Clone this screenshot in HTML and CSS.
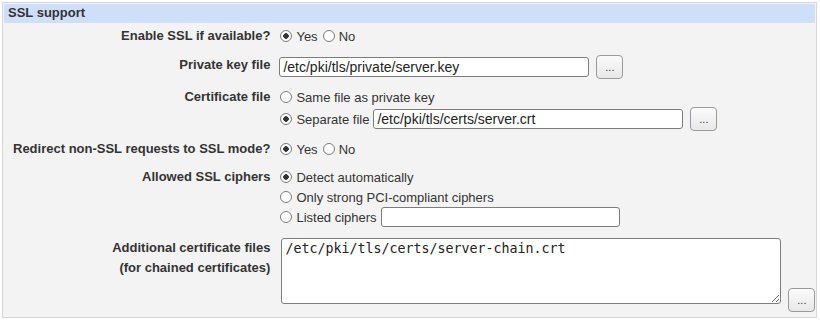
FILE: index.html
```html
<!DOCTYPE html>
<html lang="en">
<head>
    <meta charset="UTF-8">
    <title>SSL support</title>
    <link rel="stylesheet" href="styles.css">
</head>
<body>
<div class="section">
    <div class="section-head">SSL support</div>
    <table class="opts">
        <tr class="first">
            <td class="lbl">Enable SSL if available?</td>
            <td class="val">
                <div class="line">
                    <label><input type="radio" name="ssl" checked> Yes</label>
                    <label><input type="radio" name="ssl"> No</label>
                </div>
            </td>
        </tr>
        <tr>
            <td class="lbl">Private key file</td>
            <td class="val">
                <div class="line">
                    <input type="text" class="file" value="/etc/pki/tls/private/server.key">
                    <button class="pick">...</button>
                </div>
            </td>
        </tr>
        <tr>
            <td class="lbl">Certificate file</td>
            <td class="val">
                <div class="line">
                    <label><input type="radio" name="cert"> Same file as private key</label>
                </div>
                <div class="line">
                    <label><input type="radio" name="cert" checked> Separate file</label>
                    <input type="text" class="file" value="/etc/pki/tls/certs/server.crt">
                    <button class="pick">...</button>
                </div>
            </td>
        </tr>
        <tr>
            <td class="lbl">Redirect non-SSL requests to SSL mode?</td>
            <td class="val">
                <div class="line">
                    <label><input type="radio" name="redir" checked> Yes</label>
                    <label><input type="radio" name="redir"> No</label>
                </div>
            </td>
        </tr>
        <tr>
            <td class="lbl">Allowed SSL ciphers</td>
            <td class="val">
                <div class="line"><label><input type="radio" name="ciph" checked> Detect automatically</label></div>
                <div class="line"><label><input type="radio" name="ciph"> Only strong PCI-compliant ciphers</label></div>
                <div class="line">
                    <label><input type="radio" name="ciph"> Listed ciphers</label>
                    <input type="text" class="ciphers" value="">
                </div>
            </td>
        </tr>
        <tr class="last">
            <td class="lbl">Additional certificate files<br>(for chained certificates)</td>
            <td class="val">
                <div class="line bottom">
                    <textarea class="extra">/etc/pki/tls/certs/server-chain.crt</textarea>
                    <button class="pick">...</button>
                </div>
            </td>
        </tr>
    </table>
</div>
</body>
</html>
```

FILE: styles.css
```css
body {
    margin: 0;
    background: #fff;
    font-family: "Liberation Sans", Arial, sans-serif;
    font-size: 13px;
    color: #333;
}
.section {
    margin: 2px 3px 0 2px;
    border: 1px solid #d6d6d6;
    padding: 1px;
    background: #f3f3f3;
}
.section-head {
    background: #cfdffa;
    font-weight: bold;
    height: 19px;
    line-height: 17px;
    padding-left: 4px;
}
.opts {
    border-collapse: collapse;
    margin: 0;
}
.opts td {
    padding: 4px 0 4px 0;
    vertical-align: top;
}
.opts .first td {
    padding-top: 3px;
    padding-bottom: 5px;
}
.opts .last td {
    padding-top: 7px;
}
.lbl {
    text-align: right;
    font-weight: bold;
    line-height: 20px;
    padding-left: 9px !important;
    padding-right: 5px !important;
    white-space: nowrap;
}
.line {
    display: flex;
    align-items: center;
    min-height: 20px;
}
.line.bottom {
    align-items: flex-end;
}
label {
    display: inline-flex;
    align-items: center;
    white-space: nowrap;
}
input[type="radio"] {
    appearance: none;
    width: 12px;
    height: 12px;
    margin: 0 4px 0 5px;
    border: 1px solid #7a7a7a;
    border-radius: 50%;
    background: #fff;
}
input[type="radio"]:checked {
    background: radial-gradient(circle, #333 0 2.5px, #fff 3px);
}
input[type="text"] {
    height: 20px;
    box-sizing: border-box;
    border: 1px solid #7d7d7d;
    border-radius: 3px;
    padding: 0 3px;
    margin-left: 4px;
    font-family: "Liberation Sans", Arial, sans-serif;
    font-size: 14px;
    color: #222;
    background: #fff;
}
.file {
    width: 310px;
}
.ciphers {
    width: 239px;
}
.pick {
    width: 27px;
    height: 24px;
    margin-left: 7px;
    padding: 0;
    border: 1px solid #9a9a9a;
    border-radius: 4px;
    background: linear-gradient(#fbfbfb, #e8e8e8);
    font-family: "Liberation Sans", Arial, sans-serif;
    font-size: 11px;
    color: #333;
}
.extra {
    width: 500px;
    height: 66px;
    box-sizing: border-box;
    margin: 0 0 8px 6px;
    border: 1px solid #7d7d7d;
    border-radius: 3px;
    padding: 2px 3px;
    font-family: "DejaVu Sans Mono", monospace;
    font-size: 13.3px;
    color: #222;
    background: #fff;
}
```
